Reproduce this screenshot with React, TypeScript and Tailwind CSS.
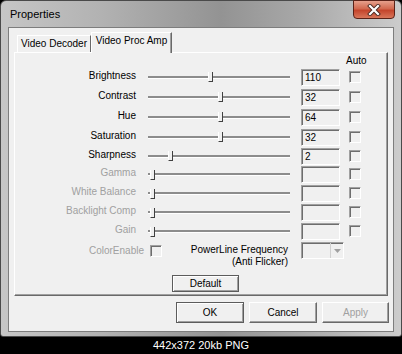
import React from 'react';

type Row = { label: string; thumb: number; value: string; enabled: boolean; h: string };

const rows: Row[] = [
  { label: 'Brightness', thumb: 62, value: '110', enabled: true, h: 'h-[20px]' },
  { label: 'Contrast', thumb: 72, value: '32', enabled: true, h: 'h-[20px]' },
  { label: 'Hue', thumb: 72, value: '64', enabled: true, h: 'h-[20px]' },
  { label: 'Saturation', thumb: 72, value: '32', enabled: true, h: 'h-[20px]' },
  { label: 'Sharpness', thumb: 22, value: '2', enabled: true, h: 'h-[18px]' },
  { label: 'Gamma', thumb: 4, value: '', enabled: false, h: 'h-[19px]' },
  { label: 'White Balance', thumb: 4, value: '', enabled: false, h: 'h-[19px]' },
  { label: 'Backlight Comp', thumb: 4, value: '', enabled: false, h: 'h-[19px]' },
  { label: 'Gain', thumb: 4, value: '', enabled: false, h: 'h-[19px]' },
];

function Sunken({ className = '', children }: { className?: string; children?: React.ReactNode }) {
  return (
    <div
      className={`border border-t-[#a0a0a0] border-l-[#a0a0a0] border-r-white border-b-white bg-[#f0f0f0] shadow-[inset_1px_1px_0_#6d6d6d] ${className}`}
    >
      {children}
    </div>
  );
}

function Slider({ thumb }: { thumb: number }) {
  return (
    <div className="relative ml-[12px] w-[142px] h-[18px] flex items-center">
      <div className="w-full h-[3px] bg-[#8c8c8c] border-b border-white" />
      <div
        className="absolute top-[4px] w-[5px] h-[10px] bg-[#f0f0f0] border-l border-white border-r border-b border-r-[#404040] border-b-[#404040]"
        style={{ left: thumb - 2 }}
      />
    </div>
  );
}

function Button({ label, strong, disabled, className = '' }: { label: string; strong?: boolean; disabled?: boolean; className?: string }) {
  return (
    <div
      className={`flex items-center justify-center bg-[#f0f0f0] border ${
        strong
          ? 'border-[#5c5c5c] shadow-[inset_1px_1px_0_#fff,inset_-1px_-1px_0_#a0a0a0]'
          : 'border-t-white border-l-white border-r-[#696969] border-b-[#696969] shadow-[inset_-1px_-1px_0_#a0a0a0]'
      } ${disabled ? 'text-[#a0a0a0]' : 'text-black'} ${className}`}
    >
      {label}
    </div>
  );
}

export default function App() {
  return (
    <div className="w-[402px] h-[354px] bg-black flex flex-col font-['Liberation_Sans',Arial,sans-serif] text-[10px] text-black leading-none">
      <div className="h-[337px] flex flex-col border border-[#4a4a4a] rounded-t-[6px] rounded-b-[3px] bg-[linear-gradient(90deg,#c6c6c6_0%,#b2b2b2_25%,#939393_55%,#a8a8a8_75%,#cccccc_100%)]">
        <div className="h-[27px] flex items-start">
          <div className="pl-[9px] pt-[8px] text-[11px] text-black">Properties</div>
          <div className="ml-auto mr-[6px] -mt-px w-[42px] h-[19px] rounded-b-[4px] border border-[#5a2218] bg-[linear-gradient(180deg,#e6a08c_0%,#d2694f_45%,#c4452c_55%,#d9765a_100%)] flex items-center justify-center">
            <svg width="14" height="12" viewBox="0 0 14 12">
              <path d="M3 2 L11 10 M11 2 L3 10" stroke="#4b2a22" strokeWidth="4" strokeLinecap="square" />
              <path d="M3 2 L11 10 M11 2 L3 10" stroke="#ffffff" strokeWidth="2.2" strokeLinecap="square" />
            </svg>
          </div>
        </div>
        <div className="flex-1 px-[7px] pb-[4px]">
          <div className="h-[305px] border border-[#7d7d7d] bg-[#f0f0f0] flex flex-col pt-[4px] pl-[5px] pr-[5px]">
            <div className="flex items-end h-[21px] -mb-px">
              <div className="ml-[3px] w-[74px] h-[18px] border-t border-l border-white border-r border-r-[#696969] flex items-center justify-center pb-[2px]">
                Video Decoder
              </div>
              <div className="relative z-10 w-[81px] h-[21px] bg-[#f0f0f0] border-t border-l border-white border-r border-r-[#696969] shadow-[inset_-1px_0_0_#a0a0a0] flex items-center justify-center pb-[4px]">
                Video Proc Amp
              </div>
            </div>
            <div className="w-[374px] h-[244px] border border-t-white border-l-white border-r-[#696969] border-b-[#696969] shadow-[inset_-1px_-1px_0_#a0a0a0] flex flex-col">
              <div className="h-[14px] flex items-center pl-[331px] pt-px">Auto</div>
              {rows.map((r) => (
                <div key={r.label} className={`${r.h} flex items-center`}>
                  <div className={`w-[121px] text-right pb-[3px] ${r.enabled ? 'text-black' : 'text-[#a0a0a0]'}`}>{r.label}</div>
                  <Slider thumb={r.thumb} />
                  <Sunken className="ml-[11px] w-[39px] h-[17px] shrink-0 flex items-center pl-[3px] pt-px">{r.value}</Sunken>
                  <Sunken className="ml-[9px] w-[12px] h-[12px] shrink-0 mb-px" />
                </div>
              ))}
              <div className="flex items-start h-[27px]">
                <div className="w-[129px] text-right mt-[4px] leading-[12px] text-[#a0a0a0]">ColorEnable</div>
                <Sunken className="ml-[6px] mt-[4px] w-[12px] h-[12px]" />
                <div className="w-[126px] text-right mt-[3px] leading-[12px]">
                  <div>PowerLine Frequency</div>
                  <div>(Anti Flicker)</div>
                </div>
                <Sunken className="ml-[13px] mt-[1px] w-[43px] h-[17px] flex justify-end">
                  <div className="w-[13px] h-full border-l border-[#d0d0d0] flex items-center justify-center">
                    <svg width="7" height="4" viewBox="0 0 7 4">
                      <path d="M0 0 H7 L3.5 4 Z" fill="#a0a0a0" />
                    </svg>
                  </div>
                </Sunken>
              </div>
              <div className="mt-[7px] ml-[157px]">
                <Button label="Default" strong className="w-[67px] h-[17px]" />
              </div>
            </div>
            <div className="mt-[6px] flex justify-end gap-[5px] mr-[-1px]">
              <Button label="OK" strong className="w-[68px] h-[21px]" />
              <Button label="Cancel" className="w-[68px] h-[21px]" />
              <Button label="Apply" disabled className="w-[67px] h-[21px]" />
            </div>
          </div>
        </div>
      </div>
      <div className="flex-1 flex items-center justify-center text-white text-[11px]">442x372 20kb PNG</div>
    </div>
  );
}
